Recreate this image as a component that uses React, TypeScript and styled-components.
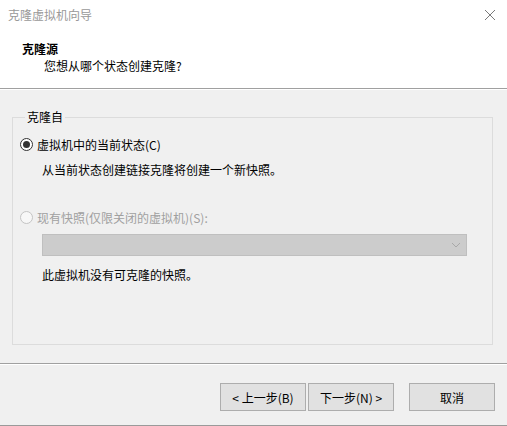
import React from 'react'
import styled, { createGlobalStyle } from 'styled-components'

const GlobalStyle = createGlobalStyle`
  html, body {
    margin: 0;
    padding: 0;
    background: #f0f0f0;
  }
  body {
    font-family: 'Noto Sans CJK SC', 'Noto Sans', sans-serif;
    font-size: 12px;
    color: #000;
  }
`

const Window = styled.div`
  width: 507px;
  height: 426px;
  display: flex;
  flex-direction: column;
  background: #f0f0f0;
  box-sizing: border-box;
  border-bottom: 1px solid #9a9a9a;
  overflow: hidden;
`

const Top = styled.div`
  background: #fff;
  height: 88px;
  border-bottom: 1px solid #a0a0a0;
  box-shadow: 0 1px 0 #fff;
  display: flex;
  flex-direction: column;
`

const TitleBar = styled.div`
  height: 30px;
  display: flex;
  align-items: center;
  justify-content: space-between;
  padding: 0 8px;
  color: #999;
  line-height: 16px;
`

const Close = styled.svg`
  width: 12px;
  height: 12px;
  margin-right: 3px;
`

const Header = styled.div`
  display: flex;
  flex-direction: column;
  padding: 11px 0 0 22px;
`

const HeaderTitle = styled.div`
  font-weight: bold;
  line-height: 16px;
`

const HeaderSub = styled.div`
  margin: 1px 0 0 22px;
  line-height: 16px;
`

const Body = styled.div`
  display: flex;
  flex-direction: column;
  padding: 20px 14px 0 12px;
`

const Group = styled.fieldset`
  margin: 0;
  height: 236px;
  box-sizing: border-box;
  border: 1px solid #dcdcdc;
  padding: 9px 25px 0 7px;
  display: flex;
  flex-direction: column;
`

const Legend = styled.legend`
  padding: 0 2px;
  margin-left: 5px;
  line-height: 16px;
`

const Option = styled.label<{ $disabled?: boolean }>`
  display: flex;
  align-items: center;
  height: 20px;
  gap: 4px;
  margin-top: ${p => (p.$disabled ? '27px' : '0')};
  color: ${p => (p.$disabled ? '#a0a0a0' : '#000')};
`

const Radio = styled.span<{ $checked?: boolean; $disabled?: boolean }>`
  width: 13px;
  height: 13px;
  box-sizing: border-box;
  border-radius: 50%;
  border: 1px solid ${p => (p.$disabled ? '#c4c4c4' : '#333')};
  background: ${p => (p.$disabled ? '#f7f7f7' : '#fff')};
  display: flex;
  align-items: center;
  justify-content: center;
  &::after {
    content: '';
    display: ${p => (p.$checked ? 'block' : 'none')};
    width: 7px;
    height: 7px;
    border-radius: 50%;
    background: #333;
  }
`

const Note = styled.div<{ $gap: number }>`
  margin: ${p => p.$gap}px 0 0 22px;
  line-height: 20px;
`

const Combo = styled.div`
  margin: 7px 0 0 22px;
  height: 22px;
  box-sizing: border-box;
  background: #cccccc;
  border: 1px solid #bfbfbf;
  display: flex;
  align-items: center;
  justify-content: flex-end;
  padding-right: 5px;
`

const Footer = styled.div`
  margin-top: 18px;
  border-top: 1px solid #a0a0a0;
  box-shadow: inset 0 1px 0 #fff;
  flex: 1;
  display: flex;
  justify-content: flex-end;
  padding: 19px 12px 0 0;
`

const Button = styled.button<{ $gapLeft?: number }>`
  width: 86px;
  height: 28px;
  margin-left: ${p => p.$gapLeft ?? 0}px;
  background: #e1e1e1;
  border: 1px solid #adadad;
  font-family: inherit;
  font-size: 12px;
  color: #000;
  padding: 0;
`

export default function App() {
  return (
    <>
      <GlobalStyle />
      <Window>
        <Top>
          <TitleBar>
            <span>克隆虚拟机向导</span>
            <Close viewBox="0 0 12 12">
              <path d="M1 1L11 11M11 1L1 11" stroke="#7a7a7a" strokeWidth="1" fill="none" />
            </Close>
          </TitleBar>
          <Header>
            <HeaderTitle>克隆源</HeaderTitle>
            <HeaderSub>您想从哪个状态创建克隆?</HeaderSub>
          </Header>
        </Top>
        <Body>
          <Group>
            <Legend>克隆自</Legend>
            <Option>
              <Radio $checked />
              虚拟机中的当前状态(C)
            </Option>
            <Note $gap={6}>从当前状态创建链接克隆将创建一个新快照。</Note>
            <Option $disabled>
              <Radio $disabled />
              现有快照(仅限关闭的虚拟机)(S):
            </Option>
            <Combo>
              <svg width="10" height="6" viewBox="0 0 10 6">
                <path d="M1 1L5 5L9 1" stroke="#a8a8a8" strokeWidth="1" fill="none" />
              </svg>
            </Combo>
            <Note $gap={9}>此虚拟机没有可克隆的快照。</Note>
          </Group>
        </Body>
        <Footer>
          <Button>&lt; 上一步(B)</Button>
          <Button $gapLeft={2}>下一步(N) &gt;</Button>
          <Button $gapLeft={15}>取消</Button>
        </Footer>
      </Window>
    </>
  )
}
